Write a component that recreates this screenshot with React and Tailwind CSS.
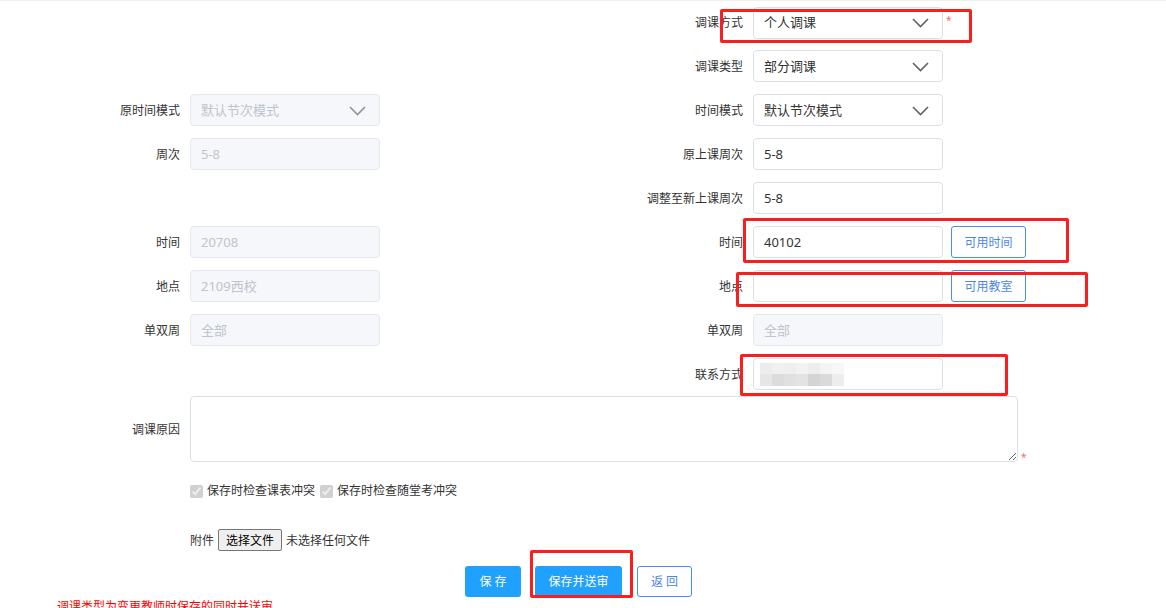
import React from "react";

const Chevron = ({ color = "#606266" }) => (
  <svg width="17" height="10" viewBox="0 0 17 10" fill="none">
    <path d="M1 1 L8.5 8.5 L16 1" stroke={color} strokeWidth="1.6" />
  </svg>
);

const Label = ({ w, children }) => (
  <div className={`${w} shrink-0 pr-[10px] pt-[1px] text-right text-[12px] text-[#333]`}>{children}</div>
);

const Select = ({ value, disabled }) => (
  <div
    className={
      disabled
        ? "flex h-[32px] w-[190px] items-center justify-between rounded-[4px] border border-[#e4e7ed] bg-[#f5f7fa] pl-[10px] pr-[13px] pt-[1px] text-[13px] text-[#c0c4cc]"
        : "flex h-[32px] w-[190px] items-center justify-between rounded-[4px] border border-[#dcdfe6] bg-white pl-[10px] pr-[13px] pt-[1px] text-[13px] text-[#333]"
    }
  >
    <span>{value}</span>
    <Chevron color={disabled ? "#8f9399" : "#606266"} />
  </div>
);

const Input = ({ value, disabled, children }) => (
  <div
    className={
      disabled
        ? "flex h-[32px] w-[190px] items-center rounded-[4px] border border-[#e4e7ed] bg-[#f5f7fa] pl-[10px] pt-[1px] text-[13px] text-[#c0c4cc]"
        : "flex h-[32px] w-[190px] items-center rounded-[4px] border border-[#dcdfe6] bg-white pl-[10px] pt-[1px] text-[13px] text-[#333]"
    }
  >
    {value}
    {children}
  </div>
);

const Row = ({ left, right, h = "h-[44px]" }) => (
  <div className={`flex ${h} items-center`}>
    <div className="flex w-[583px] shrink-0 items-center">{left}</div>
    <div className="flex items-center">{right}</div>
  </div>
);

const L = ({ label, children }) => (
  <>
    <Label w="w-[190px]">{label}</Label>
    {children}
  </>
);
const R = ({ label, children }) => (
  <>
    <Label w="w-[170px]">{label}</Label>
    {children}
  </>
);

const OutlineBtn = ({ children }) => (
  <div className="ml-[8px] flex h-[32px] w-[75px] items-center justify-center rounded-[3px] border border-[#4a8cf0] bg-white pt-[1px] text-[12px] text-[#4a86e8]">
    {children}
  </div>
);

const Blur = () => {
  const top = ["#ececec", "#f0f0f0", "#eeeeee", "#f2f2f2", "#ededed", "#f4f4f4", "#f7f7f7"];
  const bot = ["#e6e6e6", "#dcdcdc", "#e0e0e0", "#e3e3e3", "#d4d4d4", "#dadada", "#ededed"];
  return (
    <div className="flex flex-col blur-[0.6px]">
      <div className="flex">
        {top.map((c, i) => (
          <div key={i} className="h-[11px] w-[12px]" style={{ background: c }} />
        ))}
      </div>
      <div className="flex">
        {bot.map((c, i) => (
          <div key={i} className="h-[12px] w-[12px]" style={{ background: c }} />
        ))}
      </div>
    </div>
  );
};

export default function App() {
  return (
    <div className="relative h-[608px] w-[1166px] overflow-hidden border-t border-[#f0f0f0] bg-white font-['Noto_Sans','Noto_Sans_CJK_SC',sans-serif] text-[12px] text-[#333]">
      <Row
        h="h-[43px]"
        right={
          <R label="调课方式">
            <Select value="个人调课" />
            <span className="ml-[3px] mb-[4px] text-[10px] text-[#f56c6c]">*</span>
          </R>
        }
      />
      <Row right={<R label="调课类型"><Select value="部分调课" /></R>} />
      <Row
        left={<L label="原时间模式"><Select value="默认节次模式" disabled /></L>}
        right={<R label="时间模式"><Select value="默认节次模式" /></R>}
      />
      <Row
        left={<L label="周次"><Input value="5-8" disabled /></L>}
        right={<R label="原上课周次"><Input value="5-8" /></R>}
      />
      <Row right={<R label="调整至新上课周次"><Input value="5-8" /></R>} />
      <Row
        left={<L label="时间"><Input value="20708" disabled /></L>}
        right={
          <R label="时间">
            <Input value="40102" />
            <OutlineBtn>可用时间</OutlineBtn>
          </R>
        }
      />
      <Row
        left={<L label="地点"><Input value="2109西校" disabled /></L>}
        right={
          <R label="地点">
            <Input value="" />
            <OutlineBtn>可用教室</OutlineBtn>
          </R>
        }
      />
      <Row
        left={<L label="单双周"><Input value="全部" disabled /></L>}
        right={<R label="单双周"><Input value="全部" disabled /></R>}
      />
      <Row
        right={
          <R label="联系方式">
            <div className="flex h-[32px] w-[190px] items-center rounded-[4px] border border-[#dcdfe6] bg-white pl-[6px]">
              <Blur />
            </div>
          </R>
        }
      />

      {/* textarea */}
      <div className="flex items-center">
        <Label w="w-[190px]">调课原因</Label>
        <textarea
          readOnly
          className="h-[66px] w-[828px] rounded-[4px] border border-[#dcdfe6] bg-white outline-none"
        />
        <span className="ml-[3px] self-end text-[10px] leading-[10px] text-[#f56c6c]">*</span>
      </div>

      {/* checkboxes */}
      <div className="mt-[21px] flex h-[16px] items-center pl-[190px] text-[12px] text-[#333]">
        <input type="checkbox" checked disabled readOnly className="m-0 h-[13px] w-[13px]" />
        <span className="ml-[4px]">保存时检查课表冲突</span>
        <input type="checkbox" checked disabled readOnly className="ml-[5px] h-[13px] w-[13px]" />
        <span className="ml-[4px]">保存时检查随堂考冲突</span>
      </div>

      {/* file */}
      <div className="mt-[30px] flex h-[22px] items-center pl-[190px] text-[12px] text-[#333]">
        <span className="pt-[1px]">附件</span>
        <div className="ml-[4px] flex h-[22px] w-[64px] items-center justify-center rounded-[2px] border border-[#767676] bg-[#efefef] pt-[1px] text-[12px] text-black">
          选择文件
        </div>
        <span className="ml-[4px] pt-[1px]">未选择任何文件</span>
      </div>

      {/* buttons */}
      <div className="mt-[15px] flex h-[31px] items-center pl-[465px]">
        <div className="flex h-[31px] w-[56px] items-center justify-center rounded-[3px] bg-[#20a0ff] pt-[1px] text-[12px] text-white">
          保&nbsp;存
        </div>
        <div className="ml-[14px] flex h-[31px] w-[87px] items-center justify-center rounded-[3px] bg-[#20a0ff] pt-[1px] text-[12px] text-white">
          保存并送审
        </div>
        <div className="ml-[15px] flex h-[31px] w-[55px] items-center justify-center rounded-[3px] border border-[#4a8cf0] bg-white pt-[1px] text-[12px] text-[#4a86e8]">
          返&nbsp;回
        </div>
      </div>

      <div className="mt-[2px] pl-[57px] text-[12px] leading-[16px] text-[#ff0000]">
        调课类型为变更教师时保存的同时并送审
      </div>

      {/* annotation boxes */}
      <div className="pointer-events-none absolute left-[720px] top-[8px] h-[34px] w-[252px] rounded-[2px] border-[3px] border-[#fa1e1e]" />
      <div className="pointer-events-none absolute left-[743px] top-[217px] h-[45px] w-[326px] rounded-[2px] border-[3px] border-[#fa1e1e]" />
      <div className="pointer-events-none absolute left-[736px] top-[271px] h-[35px] w-[352px] rounded-[2px] border-[3px] border-[#fa1e1e]" />
      <div className="pointer-events-none absolute left-[740px] top-[353px] h-[42px] w-[268px] rounded-[2px] border-[3px] border-[#fa1e1e]" />
      <div className="pointer-events-none absolute left-[530px] top-[549px] h-[48px] w-[103px] rounded-[2px] border-[3px] border-[#fa1e1e]" />
    </div>
  );
}
